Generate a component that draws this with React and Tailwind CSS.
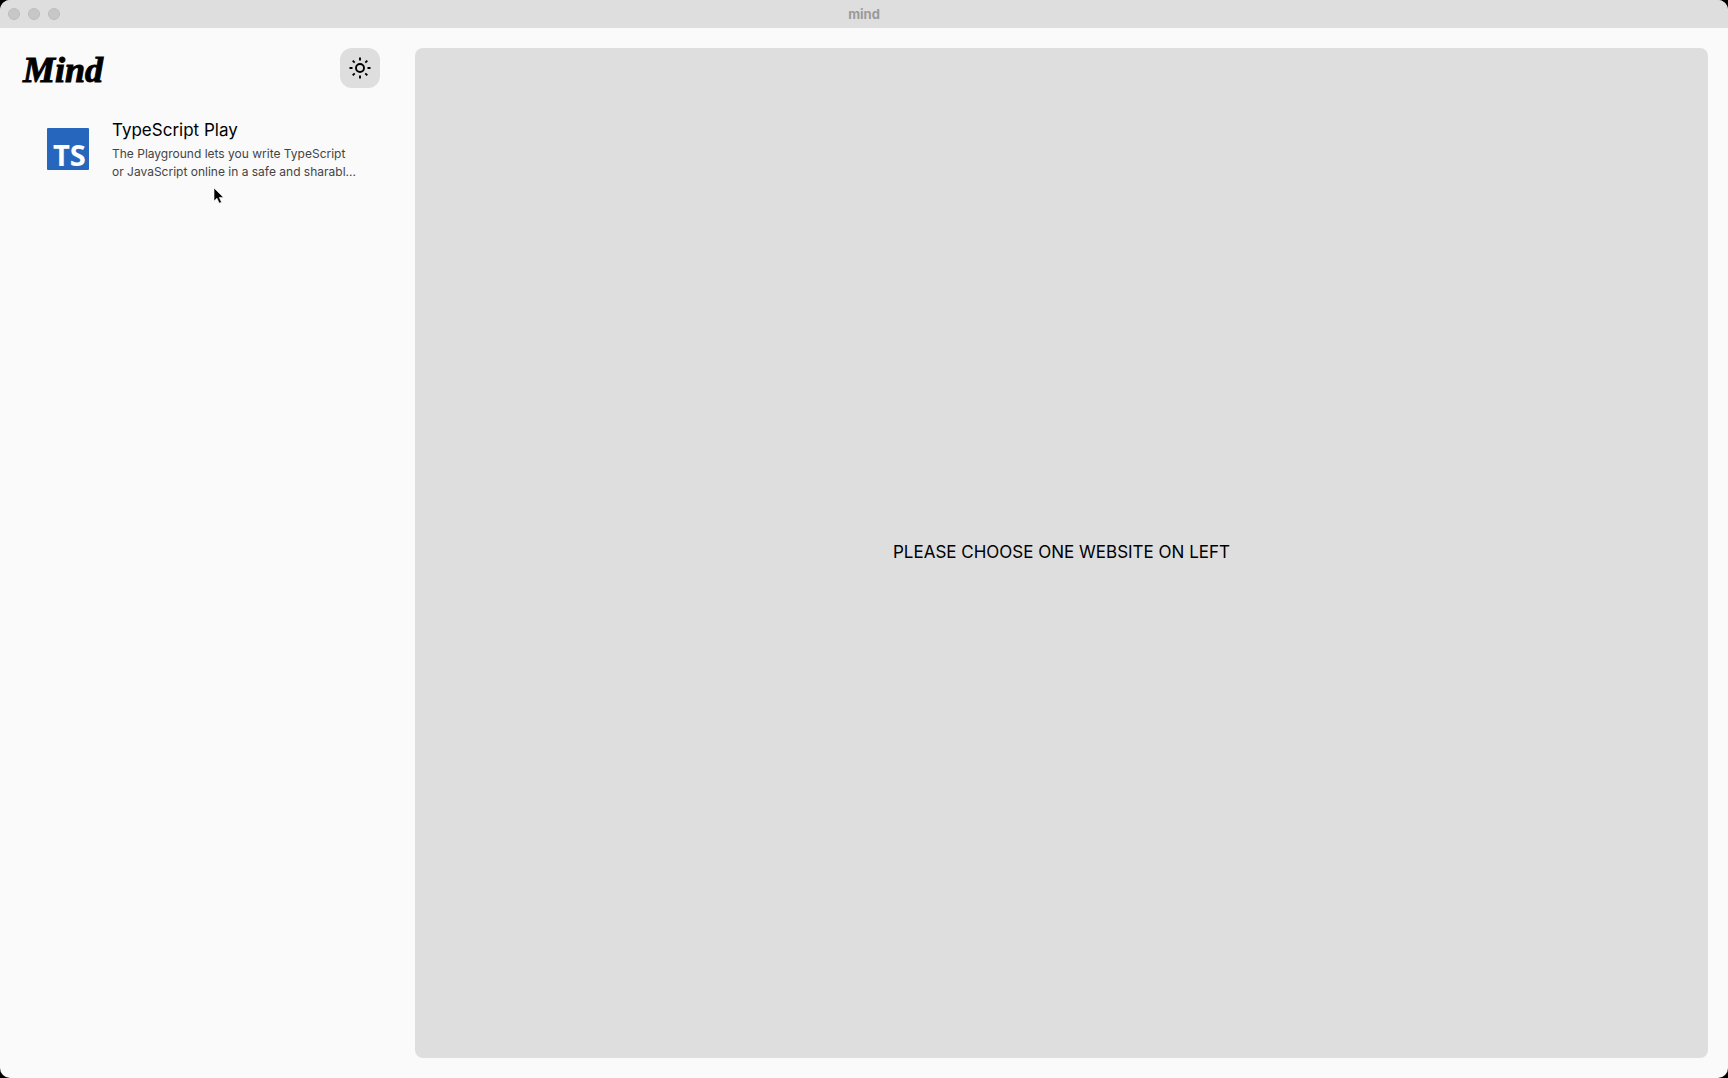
const websites = [
  {
    name: 'TypeScript Play',
    description: 'The Playground lets you write TypeScript or JavaScript online in a safe and sharabl...',
  },
];

function TitleBar() {
  return (
    <header className="grid h-7 shrink-0 grid-cols-[1fr_auto_1fr] items-center bg-[#dedede] px-2">
      <div className="flex gap-2">
        <button aria-label="Close" className="size-3 rounded-full border border-[#bdbdbd] bg-[#c7c7c7]" />
        <button aria-label="Minimize" className="size-3 rounded-full border border-[#bdbdbd] bg-[#c7c7c7]" />
        <button aria-label="Zoom" className="size-3 rounded-full border border-[#bdbdbd] bg-[#c7c7c7]" />
      </div>
      <span className="text-[13px] leading-4 font-bold text-[#9a9a9a]">mind</span>
    </header>
  );
}

function SunIcon() {
  return (
    <svg viewBox="0 0 24 24" className="size-6" fill="none" stroke="currentColor" strokeWidth="1.9" aria-hidden="true">
      <circle cx="12" cy="12" r="4" />
      <path d="M12 1.5v3M12 19.5v3M1.5 12h3M19.5 12h3M4.7 4.7l2 2M17.3 17.3l2 2M4.7 19.3l2-2M17.3 6.7l2-2" />
    </svg>
  );
}

function TypeScriptLogo() {
  return (
    <svg viewBox="0 0 42 42" className="size-[42px] shrink-0 overflow-visible" aria-hidden="true">
      <rect width="42" height="42" rx="1" fill="#2667bd" />
      <text x="6" y="38" fontFamily="Open Sans, Noto Sans, sans-serif" fontSize="29" fontWeight="700" fill="#fff">
        TS
      </text>
    </svg>
  );
}

function Pointer() {
  return (
    <svg viewBox="0 0 12 18" className="absolute top-[187px] left-[213px] h-[18px] w-3" aria-hidden="true">
      <path
        d="M1 1v13l3-2.8 2.2 5 2.3-1-2.2-4.8h4.2z"
        fill="#000"
        stroke="#fff"
        strokeWidth="0.6"
        strokeLinejoin="round"
      />
    </svg>
  );
}

export default function App() {
  return (
    <div className="h-screen bg-black font-['Inter',sans-serif] text-black">
      <div className="relative flex h-full flex-col overflow-hidden rounded-[10px] bg-[#fafafa]">
        <TitleBar />
        <div className="flex min-h-0 flex-1">
          <aside className="w-[415px] shrink-0 py-5 pr-[35px] pl-[23px]">
            <div className="flex h-10 items-center justify-between">
              <h1 className="pt-1 font-['Liberation_Serif',serif] text-4xl font-bold italic [-webkit-text-stroke:1px_black]">
                Mind
              </h1>
              <button
                aria-label="Toggle theme"
                className="flex size-10 items-center justify-center rounded-xl bg-[#dedede]"
              >
                <SunIcon />
              </button>
            </div>
            <nav className="mt-7 pl-6">
              {websites.map((site) => (
                <button key={site.name} className="flex w-full items-center gap-[23px] text-left">
                  <TypeScriptLogo />
                  <span className="block w-[248px]">
                    <span className="block text-[17px] leading-7">{site.name}</span>
                    <span className="block pt-px text-xs leading-[18px] text-[#444]">{site.description}</span>
                  </span>
                </button>
              ))}
            </nav>
          </aside>
          <main className="my-5 mr-5 flex flex-1 items-center justify-center rounded-lg bg-[#dedede]">
            <p className="text-[17px]">PLEASE CHOOSE ONE WEBSITE ON LEFT</p>
          </main>
        </div>
        <Pointer />
      </div>
    </div>
  );
}
